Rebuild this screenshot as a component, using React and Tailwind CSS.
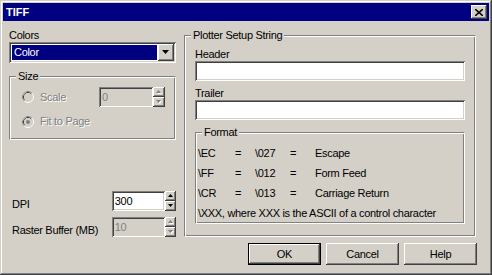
import React from 'react';

const sunken =
  'shadow-[inset_1px_1px_0_#808080,inset_-1px_-1px_0_#ffffff,inset_2px_2px_0_#404040,inset_-2px_-2px_0_#d4d0c8]';
const raised =
  'shadow-[inset_-1px_-1px_0_#404040,inset_1px_1px_0_#ffffff,inset_-2px_-2px_0_#808080,inset_2px_2px_0_#d4d0c8]';
const etched =
  'border border-t-[#808080] border-l-[#808080] border-r-white border-b-white shadow-[inset_1px_1px_0_#ffffff,inset_-1px_-1px_0_#808080]';
const disabledText = 'text-[#808080] [text-shadow:1px_1px_0_#ffffff]';

const Arrow = ({ dir = 'down', disabled = false, big = false }) => {
  const w = big ? 7 : 5;
  const h = big ? 4 : 3;
  const pts = dir === 'up' ? `0,${h} ${w},${h} ${w / 2},0` : `0,0 ${w},0 ${w / 2},${h}`;
  return (
    <svg width={w + 1} height={h + 1} viewBox={`0 0 ${w + 1} ${h + 1}`} className="block">
      {disabled && <polygon points={pts} fill="#ffffff" transform="translate(1,1)" />}
      <polygon points={pts} fill={disabled ? '#808080' : '#000000'} />
    </svg>
  );
};

const Spin = ({ disabled, width }) => (
  <div className={`flex flex-col h-[20px] ${width}`}>
    <div className={`h-[10px] flex items-center justify-center bg-[#d4d0c8] ${raised}`}>
      <Arrow dir="up" disabled={disabled} />
    </div>
    <div className={`h-[10px] flex items-center justify-center bg-[#d4d0c8] ${raised}`}>
      <Arrow dir="down" disabled={disabled} />
    </div>
  </div>
);

const Radio = ({ checked }) => (
  <svg width="12" height="12" viewBox="0 0 12 12" className="shrink-0">
    <circle cx="6" cy="6" r="5.5" fill="none" stroke="#ffffff" />
    <path d="M2.11 9.89 A5.5 5.5 0 0 1 9.89 2.11" fill="none" stroke="#808080" />
    <circle cx="6" cy="6" r="4.5" fill="none" stroke="#d4d0c8" />
    <path d="M2.82 9.18 A4.5 4.5 0 0 1 9.18 2.82" fill="none" stroke="#404040" />
    <circle cx="6" cy="6" r="4" fill="#d4d0c8" />
    {checked && <circle cx="6" cy="6" r="2" fill="#808080" />}
  </svg>
);

const Edit = ({ value, disabled, width }) => (
  <div
    className={`h-[20px] ${width} pl-[3px] flex items-center ${sunken} ${
      disabled ? 'bg-[#d4d0c8] text-[#808080]' : 'bg-white'
    }`}
  >
    {value}
  </div>
);

const Button = ({ children, isDefault }) => (
  <button
    className={`w-[73px] h-[22px] flex items-center justify-center bg-[#d4d0c8] ${
      isDefault ? 'border border-black' : ''
    } ${raised}`}
  >
    {children}
  </button>
);

const formatRows = [
  ['\\EC', '\\027', 'Escape'],
  ['\\FF', '\\012', 'Form Feed'],
  ['\\CR', '\\013', 'Carriage Return'],
];

export default function App() {
  return (
    <div
      className={`w-[492px] h-[275px] p-[3px] bg-[#d4d0c8] text-black text-[11px] leading-[13px] tracking-[-0.3px] font-['Liberation_Sans',Arial,sans-serif] shadow-[inset_-1px_-1px_0_#404040,inset_1px_1px_0_#d4d0c8,inset_-2px_-2px_0_#808080,inset_2px_2px_0_#ffffff]`}
    >
      {/* Title bar */}
      <div className="h-[18px] bg-[#000080] flex items-center justify-between pl-[3px] pr-[2px]">
        <span className="font-bold text-white tracking-normal">TIFF</span>
        <div className={`w-[16px] h-[14px] flex items-center justify-center bg-[#d4d0c8] ${raised}`}>
          <svg width="8" height="7" viewBox="0 0 8 7" className="block">
            <path d="M0 0 L8 7 M8 0 L0 7" stroke="#000" strokeWidth="1.6" />
          </svg>
        </div>
      </div>

      <div className="flex pl-[6px]">
        {/* Left column */}
        <div className="w-[167px] pt-[8px] flex flex-col">
          <div className="h-[13px]">Colors</div>
          <div className={`h-[21px] p-[2px] flex bg-white ${sunken}`}>
            <div className="flex-1 m-[1px] bg-[#000080] text-white pl-[2px] flex items-center">Color</div>
            <div className={`w-[16px] h-[17px] flex items-center justify-center bg-[#d4d0c8] ${raised}`}>
              <Arrow dir="down" big />
            </div>
          </div>

          <fieldset className={`mt-[7px] h-[70px] p-0 m-0 ${etched}`}>
            <legend className="ml-[6px] px-[2px] bg-[#d4d0c8]">Size</legend>
            <div className="pl-[12px]">
              <div className="mt-[4px] h-[20px] flex items-center">
                <div className="w-[77px] flex items-center gap-[6px]">
                  <Radio />
                  <span className={disabledText}>Scale</span>
                </div>
                <Edit value="0" disabled width="w-[54px]" />
                <Spin disabled width="w-[12px]" />
              </div>
              <div className="mt-[8px] h-[13px] flex items-center gap-[6px]">
                <Radio checked />
                <span className={disabledText}>Fit to Page</span>
              </div>
            </div>
          </fieldset>

          <div className="mt-[51px] h-[20px] flex items-end">
            <span className="w-[104px] pl-[3px]">DPI</span>
            <Edit value="300" width="w-[54px]" />
            <Spin width="w-[11px]" />
          </div>
          <div className="mt-[6px] h-[20px] flex items-end">
            <span className="w-[104px] pl-[3px]">Raster Buffer (MB)</span>
            <Edit value="10" disabled width="w-[54px]" />
            <Spin disabled width="w-[11px]" />
          </div>
        </div>

        {/* Right column */}
        <div className="ml-[8px] w-[292px] pt-[8px] flex flex-col">
          <fieldset className={`h-[208px] p-0 m-0 ${etched}`}>
            <legend className="ml-[6px] px-[2px] bg-[#d4d0c8]">Plotter Setup String</legend>
            <div className="px-[10px] flex flex-col">
              <div className="mt-[6px] h-[13px]">Header</div>
              <Edit value="" width="w-[270px]" />
              <div className="mt-[6px] h-[13px]">Trailer</div>
              <Edit value="" width="w-[270px]" />

              <fieldset className={`mt-[6px] w-[270px] h-[98px] p-0 m-0 ${etched}`}>
                <legend className="ml-[6px] px-[2px] bg-[#d4d0c8]">Format</legend>
                <div className="mt-[4px] pl-[2px]">
                  {formatRows.map(([code, num, name]) => (
                    <div key={code} className="h-[20px] flex items-center">
                      <span className="w-[37px]">{code}</span>
                      <span className="w-[20px]">=</span>
                      <span className="w-[35px]">{num}</span>
                      <span className="w-[25px]">=</span>
                      <span>{name}</span>
                    </div>
                  ))}
                  <div className="h-[20px] flex items-center">
                    \XXX, where XXX is the ASCII of a control character
                  </div>
                </div>
              </fieldset>
            </div>
          </fieldset>

          <div className="mt-[6px] flex justify-end gap-[5px] mr-[-1px]">
            <Button isDefault>OK</Button>
            <Button>Cancel</Button>
            <Button>Help</Button>
          </div>
        </div>
      </div>
    </div>
  );
}
